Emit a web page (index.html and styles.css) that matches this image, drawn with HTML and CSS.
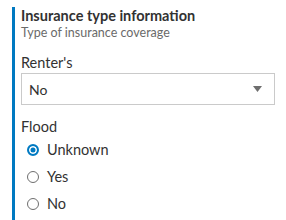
FILE: index.html
```html
<!DOCTYPE html>
<html lang="en">
<head>
    <meta charset="UTF-8">
    <title>Insurance type</title>
    <link rel="stylesheet" href="styles.css">
</head>
<body>
    <div class="group">
        <div class="group-head">
            <div class="group-title">Insurance type information</div>
            <div class="group-desc">Type of insurance coverage</div>
        </div>

        <div class="field">
            <div class="label">Renter's</div>
            <div class="select">
                <span>No</span>
                <svg class="arrow" width="9" height="6" viewBox="0 0 9 6"><path d="M0 0h9L4.5 6z" fill="#6e6e6e"/></svg>
            </div>
        </div>

        <div class="field">
            <div class="label">Flood</div>
            <div class="radios">
                <label class="radio"><span class="dot checked"></span>Unknown</label>
                <label class="radio"><span class="dot"></span>Yes</label>
                <label class="radio"><span class="dot"></span>No</label>
            </div>
        </div>
    </div>
</body>
</html>
```

FILE: styles.css
```css
body {
    margin: 0;
    background: #fff;
    font-family: Lato, "Noto Sans", sans-serif;
    color: #323232;
}
.group {
    margin: 7px 11px 0 12px;
    border-left: 3px solid #0079c1;
    padding: 0 0 0 6px;
    min-height: 213px;
}
.group-title {
    font-size: 14.5px;
    font-weight: bold;
    line-height: 18px;
}
.group-desc {
    font-size: 12.5px;
    color: #6a6a6a;
    line-height: 16px;
}
.field {
    margin-top: 12px;
}
.label {
    font-size: 14.5px;
    line-height: 20px;
}
.select {
    height: 30px;
    border: 1px solid #cacaca;
    display: flex;
    align-items: center;
    justify-content: space-between;
    padding: 0 12px 0 7px;
    font-size: 14px;
}
.arrow {
    display: block;
}
.radios {
    display: flex;
    flex-direction: column;
    gap: 7px;
    padding: 3px 0 0 6px;
}
.radio {
    display: flex;
    align-items: center;
    gap: 8px;
    font-size: 14.5px;
    line-height: 20px;
}
.dot {
    width: 10px;
    height: 10px;
    border: 1px solid #6e6e6e;
    border-radius: 50%;
    box-sizing: content-box;
}
.dot.checked {
    width: 8px;
    height: 8px;
    border: 2px solid #007ac2;
    background: #007ac2;
    box-shadow: inset 0 0 0 1.5px #fff;
}
```
